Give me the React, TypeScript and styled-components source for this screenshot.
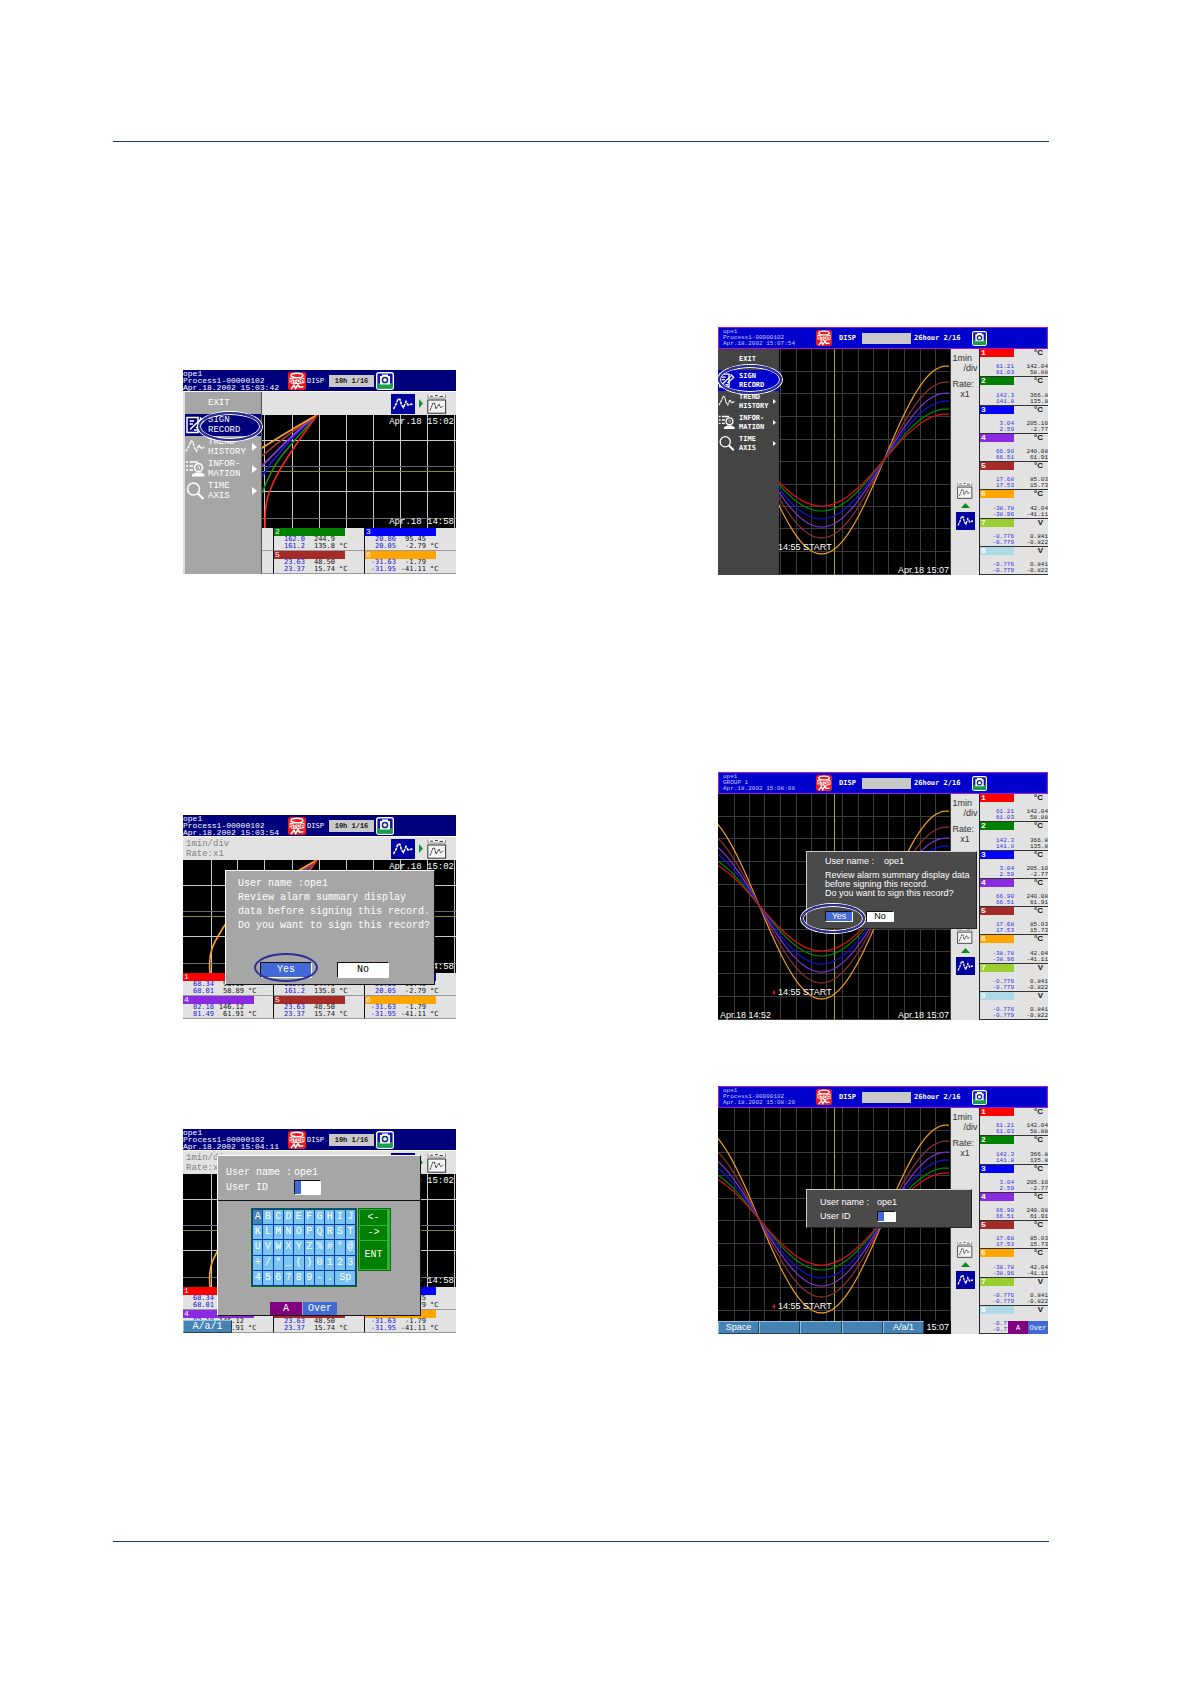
import React from "react";
import styled, { createGlobalStyle, css } from "styled-components";

const mono = `"Liberation Mono", "DejaVu Sans Mono", monospace`;
const monoCaps = `"DejaVu Sans Mono", "Liberation Mono", monospace`;
const sans = `"Liberation Sans", Arial, sans-serif`;

const Global = createGlobalStyle`
  *, *::before, *::after { box-sizing: border-box; }
  body { margin: 0; background: #fff; font-family: ${mono}; }
  button, input { font: inherit; margin: 0; padding: 0; border: 0; border-radius: 0; }
  p, ul { margin: 0; padding: 0; list-style: none; }
`;

/* ---------- page ---------- */

const Page = styled.div`
  padding: 141px 141px 142px 113px;
`;
const Sheet = styled.main`
  border-top: 1px solid #1c3a6c;
  border-bottom: 1px solid #1c3a6c;
  padding: 185px 1px 207px 70px;
`;
const Row = styled.section<{ $gap?: number }>`
  display: flex;
  justify-content: space-between;
  align-items: flex-end;
  margin-top: ${(p) => p.$gap ?? 0}px;
`;

/* ---------- icons ---------- */

const StopIcon = ({ size }: { size: number }) => (
  <svg width={size} height={size} viewBox="0 0 18 18" aria-label="Stop">
    <rect width="18" height="18" rx="2.5" fill="#e81c24" />
    <ellipse cx="9" cy="3.4" rx="6" ry="2.2" fill="none" stroke="#fff" strokeWidth="1.4" />
    <path d="M1.6 5.4 Q9 8 16.4 5.4 V11 Q9 13.2 1.6 11 Z" fill="#fff" />
    <text x="9" y="11" textAnchor="middle" fontSize="5.4" fontWeight="700" fill="#e81c24" fontFamily="Liberation Sans, sans-serif">STOP</text>
    <path d="M3 17 L6 13.2 L7.6 16.4 L10 12.8 L11.6 15.2 L15.4 14.8" fill="none" stroke="#fff" strokeWidth="1.6" />
  </svg>
);

const CameraIcon = ({ size }: { size: number }) => (
  <svg width={size} height={size} viewBox="0 0 18 18" aria-label="Snapshot">
    <rect x="0.7" y="0.7" width="16.6" height="16.6" rx="2" fill="#1010c0" stroke="#fff" strokeWidth="1.4" />
    <path d="M1.4 11 H16.6 V16.6 H1.4 Z" fill="#16a04a" />
    <path d="M6 2.4 H12 V4 H14 V12.4 H4 V4 H6 Z" fill="#fff" />
    <circle cx="9" cy="8" r="2.6" fill="#fff" stroke="#0a2a80" strokeWidth="1.5" />
  </svg>
);

const WaveTile = ({ w, h }: { w: number; h: number }) => (
  <svg width={w} height={h} viewBox="0 0 24 20" preserveAspectRatio="none" aria-hidden>
    <rect width="24" height="20" fill="#0000a0" />
    <path d="M2.5 15 L5 10.5 L7 5 L9 5.5 L10.5 11 L12.5 13.5 L15 7.5 L17 11 L21.5 10" fill="none" stroke="#fff" strokeWidth="1.6" strokeDasharray="3 0.8" />
  </svg>
);

const DocTile = ({ w, h }: { w: number; h: number }) => (
  <svg width={w} height={h} viewBox="0 0 20 20" preserveAspectRatio="none" aria-hidden>
    <path d="M1 0.5 V4 H18.5 V0.5" fill="#fff" stroke="#777" strokeWidth="0.8" />
    <path d="M3 2.2 H6 M8 1.6 H11 M12.5 2.4 H16" stroke="#333" strokeWidth="1" />
    <rect x="0.8" y="6" width="17.8" height="13.2" fill="#f4f4f4" stroke="#333" strokeWidth="1" />
    <path d="M3 16.5 L6 9 L7.5 9 L9 15 L12 10 L13.5 13.5 L16.5 12" fill="none" stroke="#333" strokeWidth="1" strokeDasharray="2.4 0.7" />
  </svg>
);

const Triangle = ({ up }: { up?: boolean }) =>
  up ? (
    <svg width="9" height="5" viewBox="0 0 9 5" aria-hidden><path d="M0 5 L4.5 0 L9 5 Z" fill="#0a8a1a" /></svg>
  ) : (
    <svg width="4" height="9" viewBox="0 0 4 9" aria-hidden><path d="M0 0 L4 4.5 L0 9 Z" fill="#0a9a2a" /></svg>
  );

type MenuGlyph = "none" | "sign" | "trend" | "info" | "time";
const MenuIcon = ({ kind, size }: { kind: MenuGlyph; size: number }) => (
  <svg width={size} height={size} viewBox="0 0 20 20" aria-hidden>
    {kind === "sign" && (
      <g fill="none" stroke="#fff" strokeWidth="1.5">
        <path d="M2 2.5 H13 V17.5 H2 Z" />
        <path d="M4.5 6 H9 M4.5 9 H8 M5 14.5 L16 4 M9 15 H12" />
        <path d="M15 2.5 L18.5 6.5 L11 13" />
      </g>
    )}
    {kind === "trend" && (
      <path d="M1 14.5 L4 9 L6 4 L8 5 L9.5 11 L11.5 14 L14 8 L16 11.5 L20 10" fill="none" stroke="#fff" strokeWidth="1.4" strokeDasharray="3 0.8" />
    )}
    {kind === "info" && (
      <g>
        <path d="M1 3 H3 M4.5 3 H13 M1 7 H3 M4.5 7 H8 M1 11 H3 M4.5 11 H8" stroke="#fff" strokeWidth="1.6" />
        <circle cx="13.5" cy="8.6" r="4" fill="none" stroke="#fff" strokeWidth="1.6" />
        <path d="M12.3 8 Q13.5 6.5 14.6 8 Q14.6 9 13.5 10" fill="none" stroke="#fff" strokeWidth="1" />
        <path d="M7 17.5 V15.5 L11 13.5 H16 L19.5 15.5 V17.5 Z" fill="#fff" />
      </g>
    )}
    {kind === "time" && (
      <g fill="none" stroke="#fff">
        <circle cx="8.5" cy="8" r="6" strokeWidth="1.5" />
        <path d="M13 12.5 L18.5 18" strokeWidth="2.4" />
      </g>
    )}
  </svg>
);

/* ---------- shared parts ---------- */

const Device = styled.article<{ $large?: boolean }>`
  position: relative;
  display: flex;
  flex-direction: column;
  flex: none;
  width: ${(p) => (p.$large ? 330 : 273)}px;
  height: ${(p) => (p.$large ? 248 : 204)}px;
  margin-bottom: ${(p) => (p.$large ? 0 : 1)}px;
  overflow: hidden;
  background: #e2e2e2;
  white-space: pre;
`;

const Header = styled.header<{ $large?: boolean }>`
  display: grid;
  align-items: center;
  flex: none;
  color: #fff;
  ${(p) =>
    p.$large
      ? css`
          grid-template-columns: 93px 23px 23px 52px 58px 16px;
          height: 22px;
          padding-left: 4px;
          border: 1px solid #a814d8;
          background: #0000cd;
        `
      : css`
          grid-template-columns: 105px 19px 22px 47px 18px;
          height: 21px;
          background: #00007c;
        `}
`;
const HeaderLines = styled.div<{ $large?: boolean }>`
  font: ${(p) => (p.$large ? "6px/6px" : "8px/7px")} ${mono};
  color: ${(p) => (p.$large ? "#c8c8ff" : "#fff")};
`;
const HeaderLabel = styled.span<{ $large?: boolean }>`
  font: ${(p) => (p.$large ? `bold 7px/10px ${monoCaps}` : `7px/10px ${monoCaps}`)};
`;
const HeaderBox = styled.span<{ $large?: boolean }>`
  width: ${(p) => (p.$large ? 49 : 45)}px;
  height: ${(p) => (p.$large ? 11 : 12)}px;
  background: #c9c9c9;
  color: #111;
  text-align: center;
  font: bold 7px/12px ${mono};
`;

const Ring = styled.i<{ $x: number; $y: number; $halo?: boolean }>`
  position: absolute;
  left: ${(p) => p.$x}px;
  top: ${(p) => p.$y}px;
  width: 64px;
  height: 29px;
  border: 2px solid #2e2e96;
  border-radius: 50%;
  pointer-events: none;
  ${(p) => p.$halo && css`box-shadow: 0 0 0 1px #fff, inset 0 0 0 1px #fff;`}
`;

const Menu = styled.nav<{ $large?: boolean }>`
  position: absolute;
  left: 0;
  top: 22px;
  bottom: 0;
  width: ${(p) => (p.$large ? 61 : 79)}px;
  display: flex;
  flex-direction: column;
  background: ${(p) => (p.$large ? "#444" : "#a6a6a6")};
  ${(p) =>
    !p.$large &&
    css`
      border-left: 2px solid #dcdcdc;
      border-right: 1px solid #555;
    `}
`;
const MenuItem = styled.button<{ $large?: boolean; $on?: boolean }>`
  display: grid;
  align-items: center;
  text-align: left;
  white-space: pre;
  color: #fff;
  background: ${(p) => (p.$on ? (p.$large ? "#0000cd" : "#00007c") : "transparent")};
  ${(p) =>
    p.$large
      ? css`
          grid-template-columns: 21px 34px 4px;
          height: 21px;
          font: bold 7px/9px ${monoCaps};
        `
      : css`
          grid-template-columns: 23px 44px 5px;
          height: 22px;
          font: 9px/10px ${mono};
        `}
`;

const menuItems: { label: string; icon: MenuGlyph; more?: boolean }[] = [
  { label: "EXIT", icon: "none" },
  { label: "SIGN\nRECORD", icon: "sign" },
  { label: "TREND\nHISTORY", icon: "trend", more: true },
  { label: "INFOR-\nMATION", icon: "info", more: true },
  { label: "TIME\nAXIS", icon: "time", more: true },
];

const SideMenu = ({ large }: { large?: boolean }) => (
  <>
    <Menu $large={large}>
      {menuItems.map((m) => (
        <MenuItem key={m.label} type="button" $large={large} $on={m.icon === "sign"}>
          <MenuIcon kind={m.icon} size={large ? 17 : 20} />
          <span>{m.label}</span>
          {m.more && (
            <svg width={large ? 3 : 5} height={large ? 5 : 8} viewBox="0 0 5 8" aria-hidden>
              <path d="M0 0 L5 4 L0 8 Z" fill="#fff" />
            </svg>
          )}
        </MenuItem>
      ))}
    </Menu>
    <Ring $x={large ? 0 : 15} $y={large ? 38 : 42} $halo />
  </>
);

const Dialog = styled.section<{ $x: number; $y: number; $w: number; $h: number; $dark?: boolean }>`
  position: absolute;
  left: ${(p) => p.$x}px;
  top: ${(p) => p.$y}px;
  width: ${(p) => p.$w}px;
  height: ${(p) => p.$h}px;
  color: #fff;
  background: ${(p) => (p.$dark ? "#4a4a4a" : "#a6a6a6")};
  border: 1px solid;
  border-color: ${(p) => (p.$dark ? "#ccc #222 #222 #ccc" : "#fff #111 #111 #fff")};
  font: ${(p) => (p.$dark ? `9px/9px ${sans}` : `10px/14px ${mono}`)};
`;
const Message = styled.div<{ $dark?: boolean }>`
  padding: ${(p) => (p.$dark ? "5px 0 0 18px" : "6px 0 0 12px")};
`;
const Intro = styled.p<{ $gap?: boolean }>`
  margin-bottom: ${(p) => (p.$gap ? 5 : 0)}px;
`;
const Choices = styled.div<{ $dark?: boolean }>`
  display: flex;
  gap: ${(p) => (p.$dark ? 13 : 25)}px;
  padding: ${(p) => (p.$dark ? "13px 0 0 18px" : "29px 0 0 34px")};
`;
const Choice = styled.button<{ $on?: boolean; $dark?: boolean }>`
  width: ${(p) => (p.$dark ? 28 : 52)}px;
  height: ${(p) => (p.$dark ? 11 : 16)}px;
  color: ${(p) => (p.$on ? "#fff" : "#000")};
  background: ${(p) => (p.$on ? "#4169d8" : "#fff")};
  border: 1px solid;
  border-color: #111 #fff #fff #111;
  line-height: ${(p) => (p.$dark ? 9 : 14)}px;
`;
const Field = styled.div<{ $dark?: boolean }>`
  display: grid;
  grid-template-columns: ${(p) => (p.$dark ? "57px" : "68px")} auto;
  justify-content: start;
  align-items: center;
  height: ${(p) => (p.$dark ? 14 : 15)}px;
`;
const IdInput = styled.input<{ $dark?: boolean }>`
  width: ${(p) => (p.$dark ? 19 : 27)}px;
  height: ${(p) => (p.$dark ? 11 : 15)}px;
  border: 1px solid;
  border-color: #111 #fff #fff #111;
  background: linear-gradient(90deg, #4169d8 6px, #fff 6px);
`;
const Mode = styled.button<{ $tone: string; $w: number }>`
  width: ${(p) => p.$w}px;
  height: 13px;
  color: #fff;
  background: ${(p) => p.$tone};
`;
const SoftKey = styled.button`
  height: 13px;
  color: #fff;
  background: #4682b4;
  border: 1px solid;
  border-color: #8fc4e4 #245 #245 #8fc4e4;
`;

/* ---------- channel data ---------- */

type Channel = { n: number; tone: string; a: string[]; b: string[]; unit: string };

const smallChannels: Channel[] = [
  { n: 1, tone: "#ff0000", a: ["68.34", "68.01"], b: ["98.18", "58.89"], unit: "°C" },
  { n: 2, tone: "#008000", a: ["162.0", "161.2"], b: ["244.9", "135.8"], unit: "°C" },
  { n: 3, tone: "#0000ff", a: ["20.86", "20.05"], b: ["95.45", "-2.79"], unit: "°C" },
  { n: 4, tone: "#8a2be2", a: ["82.18", "81.49"], b: ["146.12", "61.91"], unit: "°C" },
  { n: 5, tone: "#a52a2a", a: ["23.63", "23.37"], b: ["48.50", "15.74"], unit: "°C" },
  { n: 6, tone: "#ffa500", a: ["-31.63", "-31.95"], b: ["-1.79", "-41.11"], unit: "°C" },
];
const largeChannels: Channel[] = [
  { n: 1, tone: "#ff0000", a: ["61.21", "61.03"], b: ["142.04", "58.88"], unit: "°C" },
  { n: 2, tone: "#008000", a: ["142.3", "141.8"], b: ["366.8", "135.8"], unit: "°C" },
  { n: 3, tone: "#0000ff", a: ["3.04", "2.59"], b: ["205.10", "-2.77"], unit: "°C" },
  { n: 4, tone: "#8a2be2", a: ["66.90", "66.51"], b: ["240.08", "61.91"], unit: "°C" },
  { n: 5, tone: "#a52a2a", a: ["17.68", "17.53"], b: ["85.03", "15.73"], unit: "°C" },
  { n: 6, tone: "#ffa500", a: ["-38.78", "-38.96"], b: ["42.04", "-41.11"], unit: "°C" },
  { n: 7, tone: "#9acd32", a: ["-0.776", "-0.779"], b: ["0.841", "-0.822"], unit: "V" },
  { n: 8, tone: "#add8e6", a: ["-0.776", "-0.779"], b: ["0.841", "-0.822"], unit: "V" },
];

const SmallGrid = styled.ul`
  display: grid;
  grid-template-columns: repeat(3, 1fr);
  grid-template-rows: 23px 23px;
  flex: none;
`;
const SmallCell = styled.li`
  display: grid;
  grid-template-columns: 31px 30px 1fr;
  grid-template-rows: 8px 14px;
  border-right: 1px solid #111;
  border-bottom: 1px solid #999;
  &:nth-child(3n) { border-right: 0; }
  font: 7px/7px ${monoCaps};
`;
const Tag = styled.b<{ $tone: string; $large?: boolean }>`
  grid-column: 1 / -1;
  width: ${(p) => (p.$large ? 34 : 71)}px;
  height: 8px;
  padding-left: 1px;
  color: #fff;
  background: ${(p) => p.$tone};
  font: ${(p) => (p.$large ? "bold 8px/8px" : "8px/8px")} ${mono};
`;
const Values = styled.span<{ $tone: string }>`
  color: ${(p) => p.$tone};
  text-align: right;
`;
const SmallUnit = styled.span`
  align-self: end;
  padding-left: 4px;
  color: #111;
`;

const SmallChannels = () => (
  <SmallGrid>
    {smallChannels.map((c) => (
      <SmallCell key={c.n}>
        <Tag $tone={c.tone}>{c.n}</Tag>
        <Values $tone="#1414e0">{c.a.join("\n")}</Values>
        <Values $tone="#111">{c.b.join("\n")}</Values>
        <SmallUnit>{c.unit}</SmallUnit>
      </SmallCell>
    ))}
  </SmallGrid>
);

const LargeList = styled.ul`
  display: grid;
  grid-template-rows: repeat(8, 1fr);
  border-left: 1px solid #222;
`;
const LargeCell = styled.li`
  display: grid;
  grid-template-columns: 34px 34px;
  grid-template-rows: 8px 1fr;
  border-bottom: 1px solid #333;
  overflow: hidden;
  font: 6px/6px ${mono};
`;
const LargeTag = styled(Tag)`
  grid-column: 1;
`;
const LargeUnit = styled.span`
  padding-right: 5px;
  text-align: right;
  color: #111;
  font: bold 8px/8px ${sans};
`;
const LargeValues = styled(Values)`
  align-self: end;
`;

/* ---------- trend charts ---------- */

const smallCurves = [
  { tone: "#109010", d: "M134 0 C115 22 95 42 88 58 C84 66 82 70 79 78" },
  { tone: "#1818ff", d: "M134 0 C112 18 96 38 88 48 C84 54 82 57 79 62" },
  { tone: "#9040e0", d: "M134 0 C112 16 94 36 79 51" },
  { tone: "#a83838", d: "M134 0 C112 14 94 28 79 41" },
  { tone: "#ffa818", d: "M134 0 C110 13 92 25 79 33 C56 48 46 58 40 68 C30 84 25 92 27 113" },
  { tone: "#ff2020", d: "M134 0 C120 20 100 46 91 66 C84 82 82 86 82 113" },
];

const Plot = styled.div<{ $large?: boolean }>`
  position: relative;
  height: ${(p) => (p.$large ? 226 : 113)}px;
  flex: none;
  background: #000;
  color: #fff;
  font: ${(p) => (p.$large ? `9px/10px ${sans}` : `9px/12px ${mono}`)};
  & > svg { display: block; }
`;
const PlotLabel = styled.time<{ $at: "tr" | "br" | "bl" }>`
  position: absolute;
  ${(p) => (p.$at === "tr" ? "top: 1px; right: 2px;" : "")}
  ${(p) => (p.$at === "br" ? "bottom: 0; right: 2px;" : "")}
  ${(p) => (p.$at === "bl" ? "bottom: 0; left: 2px;" : "")}
`;
const StartMark = styled.span`
  position: absolute;
  left: 54px;
  top: 193px;
  display: flex;
  align-items: center;
  gap: 3px;
`;

const SmallPlot = () => (
  <Plot>
    <svg width="273" height="113" viewBox="0 0 273 113" aria-label="Trend">
      <g stroke="#c8c8c8" shapeRendering="crispEdges">
        {[29, 55, 82, 110, 137, 164, 191, 218, 245, 272].map((x) => (
          <path key={x} d={`M${x - 0.5} 0 V113`} />
        ))}
        <path d="M0 25.5 H273 M0 76.5 H273" />
        <path d="M0 51.5 H273 M0 103.5 H273" stroke="#6a6a6a" />
        <path d="M0 56.5 H273" stroke="#8a8a30" />
      </g>
      {smallCurves.map((c) => (
        <path key={c.tone} d={c.d} fill="none" stroke={c.tone} strokeWidth="1.6" />
      ))}
    </svg>
    <PlotLabel $at="tr">Apr.18 15:02</PlotLabel>
    <PlotLabel $at="br">Apr.18 14:58</PlotLabel>
  </Plot>
);

const waves = [
  { tone: "#f0a020", amp: 94 },
  { tone: "#903030", amp: 78 },
  { tone: "#8030d8", amp: 67 },
  { tone: "#1010e0", amp: 59 },
  { tone: "#008800", amp: 51 },
  { tone: "#e01010", amp: 46 },
];
const wavePath = (amp: number) => {
  const points: string[] = [];
  for (let x = 0; x <= 233; x += 3) {
    points.push(`${x} ${(111 + amp * Math.sin((Math.PI * (x - 41)) / 125)).toFixed(1)}`);
  }
  return `M${points.join(" L")}`;
};

const LargePlot = ({ left }: { left?: boolean }) => (
  <Plot $large>
    <svg width="233" height="226" viewBox="0 0 233 226" aria-label="Trend">
      <g stroke="#3c3c3c" shapeRendering="crispEdges">
        {[16, 31, 46, 62, 78, 93, 108, 124, 140, 155, 170, 186, 202, 217, 232].map((x) => (
          <path key={x} d={`M${x + 0.5} 0 V226`} />
        ))}
        {[22, 44, 67, 90, 112, 135, 157, 179, 202, 225].map((y) => (
          <path key={y} d={`M0 ${y + 0.5} H233`} />
        ))}
        <path d="M116.5 0 V226" stroke="#a8a820" />
      </g>
      {waves.map((w) => (
        <path key={w.tone} d={wavePath(w.amp)} fill="none" stroke={w.tone} strokeWidth="1.2" />
      ))}
    </svg>
    <StartMark>
      <svg width="3" height="5" viewBox="0 0 3 5" aria-hidden><path d="M3 0 L0 2.5 L3 5 Z" fill="#f01010" /></svg>
      14:55 START
    </StartMark>
    {left && <PlotLabel $at="bl">Apr.18 14:52</PlotLabel>}
    <PlotLabel $at="br">Apr.18 15:07</PlotLabel>
  </Plot>
);

/* ---------- small recorder ---------- */

const StatusBar = styled.div`
  display: flex;
  align-items: center;
  flex: none;
  height: 24px;
  border-top: 1px solid #fff;
  padding: 0 9px 0 3px;
  color: #808080;
  font: 9px/10px ${mono};
`;
const TileRow = styled.span`
  display: flex;
  align-items: center;
  gap: 4px;
  margin-left: auto;
`;

type SmallProps = { time: string; scale?: string; children: React.ReactNode };
const SmallRecorder = ({ time, scale, children }: SmallProps) => (
  <Device>
    <Header>
      <HeaderLines>{`ope1\nProcess1-00000102\nApr.18.2002 ${time}`}</HeaderLines>
      <StopIcon size={18} />
      <HeaderLabel>DISP</HeaderLabel>
      <HeaderBox>10h 1/16</HeaderBox>
      <CameraIcon size={18} />
    </Header>
    <StatusBar>
      {scale && <span>{scale}</span>}
      <TileRow>
        <WaveTile w={24} h={20} />
        <Triangle />
        <DocTile w={20} h={20} />
      </TileRow>
    </StatusBar>
    <SmallPlot />
    <SmallChannels />
    {children}
  </Device>
);

/* ---------- large recorder ---------- */

const LargeBody = styled.div`
  display: grid;
  grid-template-columns: 233px 28px 69px;
  height: 226px;
`;
const SideStrip = styled.div`
  display: flex;
  flex-direction: column;
  align-items: center;
  padding: 4px 0 45px;
  color: #333;
  font: 9px/10px ${sans};
`;
const Scale = styled.p`
  width: 25px;
  margin-bottom: 6px;
`;
const ScaleUnit = styled.span<{ $end?: boolean }>`
  display: block;
  text-align: ${(p) => (p.$end ? "right" : "center")};
`;
const SideTiles = styled.div`
  display: flex;
  flex-direction: column;
  align-items: center;
  gap: 4px;
  margin-top: auto;
`;

const LargeRecorder = ({ lines, left, children }: { lines: string; left?: boolean; children: React.ReactNode }) => (
  <Device $large>
    <Header $large>
      <HeaderLines $large>{lines}</HeaderLines>
      <StopIcon size={16} />
      <HeaderLabel $large>DISP</HeaderLabel>
      <HeaderBox $large />
      <HeaderLabel $large>26hour 2/16</HeaderLabel>
      <CameraIcon size={15} />
    </Header>
    <LargeBody>
      <LargePlot left={left} />
      <SideStrip>
        <Scale>1min<ScaleUnit $end>/div</ScaleUnit></Scale>
        <Scale>Rate:<ScaleUnit>x1</ScaleUnit></Scale>
        <SideTiles>
          <DocTile w={16} h={17} />
          <Triangle up />
          <WaveTile w={19} h={18} />
        </SideTiles>
      </SideStrip>
      <LargeList>
        {largeChannels.map((c) => (
          <LargeCell key={c.n}>
            <LargeTag $large $tone={c.tone}>{c.n}</LargeTag>
            <LargeUnit>{c.unit}</LargeUnit>
            <LargeValues $tone="#3030e0">{c.a.join("\n")}</LargeValues>
            <LargeValues $tone="#222">{c.b.join("\n")}</LargeValues>
          </LargeCell>
        ))}
      </LargeList>
    </LargeBody>
    {children}
  </Device>
);

/* ---------- keyboard ---------- */

const IdFields = styled.div<{ $dark?: boolean }>`
  ${(p) =>
    p.$dark
      ? css`padding: 5px 0 0 13px;`
      : css`
          height: 45px;
          padding: 9px 0 0 8px;
          border-bottom: 1px solid #111;
        `}
`;
const Keypad = styled.div`
  display: flex;
  align-items: flex-start;
  gap: 1px;
  margin: 7px 0 0 33px;
`;
const Keys = styled.div`
  display: grid;
  grid-template-columns: repeat(10, 1fr);
  grid-template-rows: repeat(5, 1fr);
  gap: 1px;
  width: 106px;
  height: 79px;
  padding: 1px;
  border: 1px solid #0a6a1a;
  background: #0a3ab0;
`;
const Key = styled.button<{ $on?: boolean; $wide?: boolean }>`
  min-width: 0;
  grid-column: span ${(p) => (p.$wide ? 2 : 1)};
  color: #fff;
  background: ${(p) => (p.$on ? "#4682b4" : "#78c4ee")};
  line-height: 14px;
`;
const Actions = styled.div`
  display: grid;
  grid-template-rows: 15px 14px 1fr;
  gap: 1px;
  width: 33px;
  height: 63px;
  padding: 1px 3px 1px 1px;
  border: 1px solid #0a6a1a;
  background: #32b432;
`;
const Action = styled.button`
  color: #fff;
  background: #008000;
`;
const Modes = styled.div`
  position: absolute;
  bottom: 0;
  left: 52px;
  display: flex;
  gap: 1px;
`;
const keyRows = ["ABCDEFGHIJ", "KLMNOPQRST", "UVWXYZ%#°@", "+/*_()0123", "456789-."];

const CornerKey = styled(SoftKey)`
  position: absolute;
  left: 0;
  bottom: 0;
  width: 49px;
  font: 10px/11px ${mono};
`;
const SoftBar = styled.div`
  position: absolute;
  left: 0;
  bottom: 0;
  display: grid;
  grid-template-columns: repeat(5, 1fr) 27px;
  align-items: center;
  width: 233px;
  background: #000;
  color: #fff;
  font: 9px/11px ${sans};
`;
const SoftTime = styled.time`
  padding-right: 2px;
  text-align: right;
`;
const LargeModes = styled.div`
  position: absolute;
  right: 0;
  bottom: 0;
  display: flex;
  font: 7px/10px ${mono};
`;

export default function App() {
  return (
    <Page>
      <Global />
      <Sheet>
        <Row>
          <SmallRecorder time="15:03:42">
            <SideMenu />
          </SmallRecorder>
          <LargeRecorder lines={"ope1\nProcess1-00000102\nApr.18.2002 15:07:54"}>
            <SideMenu large />
          </LargeRecorder>
        </Row>

        <Row $gap={197}>
          <SmallRecorder time="15:03:54" scale={"1min/div\nRate:x1"}>
            <Dialog $x={42} $y={55} $w={210} $h={115}>
              <Message>
                <Intro>User name :ope1</Intro>
                <p>{"Review alarm summary display\ndata before signing this record.\nDo you want to sign this record?"}</p>
              </Message>
              <Choices>
                <Choice type="button" $on>Yes</Choice>
                <Choice type="button">No</Choice>
              </Choices>
            </Dialog>
            <Ring $x={71} $y={138} />
          </SmallRecorder>
          <LargeRecorder left lines={"ope1\nGROUP 1\nApr.18.2002 15:08:08"}>
            <Dialog $dark $x={88} $y={79} $w={171} $h={78}>
              <Message $dark>
                <Intro $gap>{"User name :    ope1"}</Intro>
                <p>{"Review alarm summary display data\nbefore signing this record.\nDo you want to sign this record?"}</p>
              </Message>
              <Choices $dark>
                <Choice type="button" $dark $on>Yes</Choice>
                <Choice type="button" $dark>No</Choice>
              </Choices>
            </Dialog>
            <Ring $x={83} $y={132} $halo />
          </LargeRecorder>
        </Row>

        <Row $gap={66}>
          <SmallRecorder time="15:04:11" scale={"1min/div\nRate:x1"}>
            <Dialog $x={34} $y={26} $w={204} $h={161}>
              <IdFields>
                <Field><span>User name :</span><span>ope1</span></Field>
                <Field>
                  <label htmlFor="user-id-small">User ID</label>
                  <IdInput id="user-id-small" type="text" />
                </Field>
              </IdFields>
              <Keypad>
                <Keys>
                  {keyRows.map((row) =>
                    [...row].map((k) => <Key key={k} type="button" $on={k === "A"}>{k}</Key>)
                  )}
                  <Key type="button" $wide>Sp</Key>
                </Keys>
                <Actions>
                  <Action type="button">{"<-"}</Action>
                  <Action type="button">{"->"}</Action>
                  <Action type="button">ENT</Action>
                </Actions>
              </Keypad>
              <Modes>
                <Mode type="button" $tone="#800080" $w={32}>A</Mode>
                <Mode type="button" $tone="#4169d8" $w={34}>Over</Mode>
              </Modes>
            </Dialog>
            <CornerKey type="button">A/a/1</CornerKey>
          </SmallRecorder>
          <LargeRecorder lines={"ope1\nProcess1-00000102\nApr.18.2002 15:08:20"}>
            <Dialog $dark $x={88} $y={103} $w={166} $h={39}>
              <IdFields $dark>
                <Field $dark><span>User name :</span><span>ope1</span></Field>
                <Field $dark>
                  <label htmlFor="user-id-large">User ID</label>
                  <IdInput id="user-id-large" type="text" $dark />
                </Field>
              </IdFields>
            </Dialog>
            <SoftBar>
              <SoftKey type="button">Space</SoftKey>
              <SoftKey type="button" aria-label="Soft key 2" />
              <SoftKey type="button" aria-label="Soft key 3" />
              <SoftKey type="button" aria-label="Soft key 4" />
              <SoftKey type="button">A/a/1</SoftKey>
              <SoftTime>15:07</SoftTime>
            </SoftBar>
            <LargeModes>
              <Mode type="button" $tone="#800080" $w={20}>A</Mode>
              <Mode type="button" $tone="#4169d8" $w={20}>Over</Mode>
            </LargeModes>
          </LargeRecorder>
        </Row>
      </Sheet>
    </Page>
  );
}
